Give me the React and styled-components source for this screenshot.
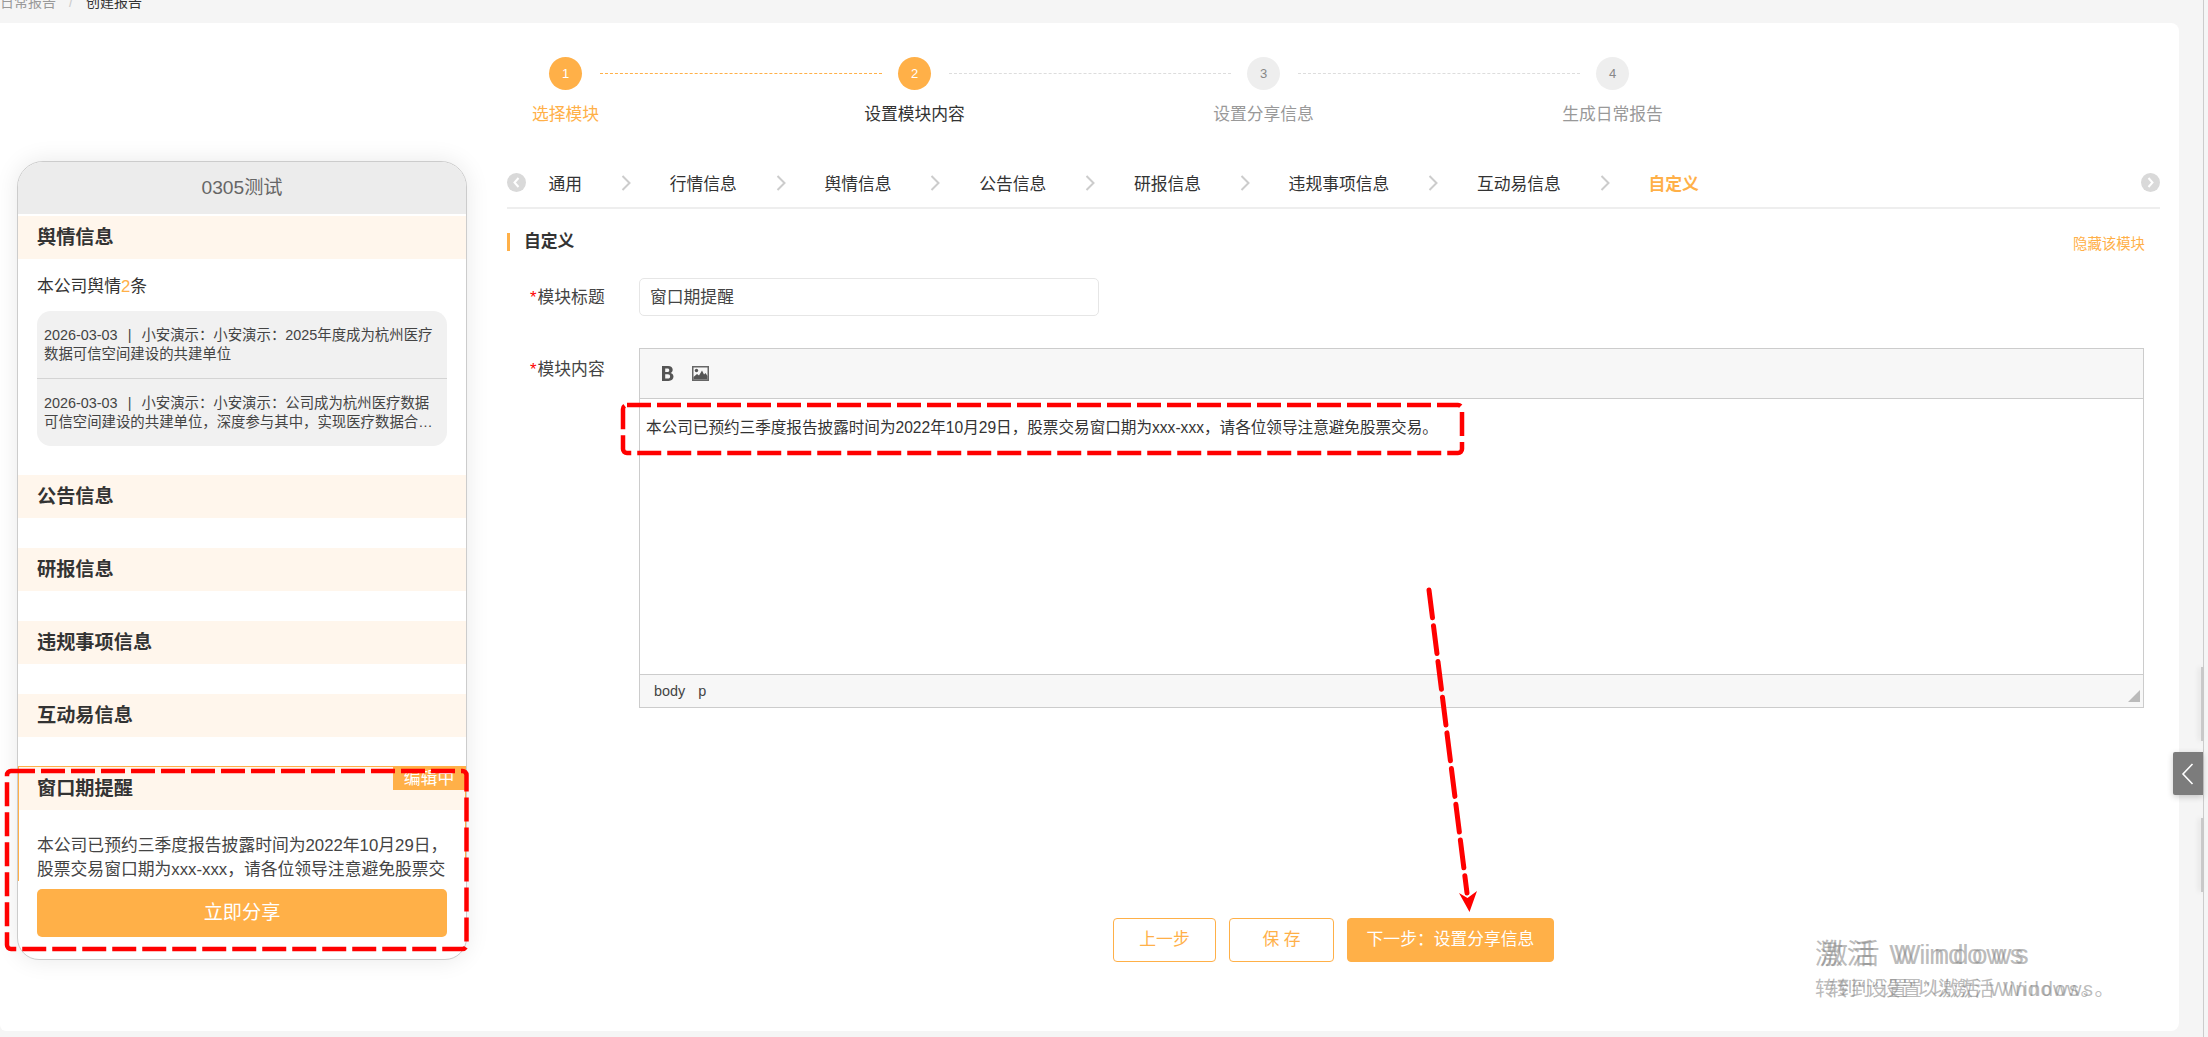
import React from "react";
import styled, { createGlobalStyle } from "styled-components";

const orange = "#ffb048";

const GlobalStyle = createGlobalStyle`
  html, body {
    margin: 0;
    padding: 0;
    width: 2208px;
    height: 1037px;
    overflow: hidden;
    background: #f5f5f5;
    font-family: "Liberation Sans", "Noto Sans CJK SC", sans-serif;
    color: #333;
  }
`;

const Page = styled.div`
  position: relative;
  width: 2208px;
  height: 1037px;
  overflow: hidden;
`;

const Breadcrumb = styled.div`
  display: flex;
  gap: 13px;
  height: 31px;
  margin: -8px 0 0 0;
  font-size: 14px;
  line-height: 20px;
  color: #999;
  b {
    font-weight: normal;
    color: #333;
  }
  i {
    font-style: normal;
    color: #ccc;
  }
`;

const Card = styled.div`
  width: 2179px;
  height: 1008px;
  background: #fff;
  border-radius: 0 8px 8px 6px;
`;

const Steps = styled.div`
  display: flex;
  height: 138px;
  padding: 34px 0 0 391px;
  box-sizing: border-box;
`;

const Step = styled.div`
  position: relative;
  width: 349px;
  display: flex;
  flex-direction: column;
  align-items: center;
  gap: 14px;
  font-size: 16.8px;
  line-height: 22px;
  color: ${(p) => (p.$state === "done" ? orange : p.$state === "now" ? "#333" : "#999")};
`;

const StepLine = styled.div`
  position: absolute;
  top: 16px;
  left: calc(50% + 34px);
  width: 282px;
  height: 0;
  border-top: 1px dashed ${(p) => (p.$on ? orange : "#ddd")};
`;

const Circle = styled.div`
  width: 33px;
  height: 33px;
  border-radius: 50%;
  display: flex;
  align-items: center;
  justify-content: center;
  font-size: 13px;
  background: ${(p) => (p.$on ? orange : "#eee")};
  color: ${(p) => (p.$on ? "#fff" : "#888")};
`;

const Body = styled.div`
  display: flex;
  align-items: flex-start;
  padding-left: 17px;
`;

const Phone = styled.div`
  flex: none;
  width: 450px;
  height: 799px;
  box-sizing: border-box;
  border: 1px solid #ccc;
  border-radius: 26px 26px 22px 22px;
  box-shadow: 0 0 24px rgba(0, 0, 0, 0.09);
  overflow: hidden;
  background: #fff;
`;

const PhoneTitle = styled.div`
  height: 52px;
  margin-bottom: 2px;
  background: #ececec;
  color: #666;
  font-size: 19.2px;
  line-height: 52px;
  text-align: center;
`;

const SectionHead = styled.div`
  height: 43px;
  padding-left: ${(p) => (p.$active ? 18 : 19)}px;
  background: #fff6ec;
  color: #333;
  font-size: 19.2px;
  font-weight: bold;
  line-height: 43px;
`;

const Section = styled.section`
  margin-bottom: 30px;
`;

const Summary = styled.div`
  padding: 17px 0 13px 19px;
  font-size: 16.8px;
  line-height: 22px;
  span {
    color: ${orange};
  }
`;

const NewsBox = styled.div`
  width: 410px;
  margin-left: 19px;
  margin-bottom: -1px;
  background: #f1f1f1;
  border-radius: 14px;
`;

const NewsItem = styled.div`
  padding: 15px 11px 15px 7px;
  height: 67px;
  box-sizing: border-box;
  font-size: 14.4px;
  line-height: 19.2px;
  color: #444;
  & + & {
    border-top: 1px solid #d4d4d4;
    height: 68px;
  }
  div {
    display: -webkit-box;
    -webkit-box-orient: vertical;
    -webkit-line-clamp: 2;
    overflow: hidden;
  }
`;

const Pipe = styled.span`
  padding: 0 10px;
`;

const ActiveSection = styled.section`
  position: relative;
  height: 115px;
  margin-top: -1px;
  box-sizing: border-box;
  border: 1px solid ${orange};
  border-bottom: none;
  overflow: hidden;
`;

const EditTag = styled.div`
  position: absolute;
  top: 0;
  right: 0;
  width: 72px;
  height: 23px;
  background: ${orange};
  color: #fff;
  font-size: 16.8px;
  line-height: 24px;
  text-align: center;
`;

const ActiveText = styled.div`
  padding: 24px 0 0 18px;
  width: 412px;
  font-size: 16.8px;
  line-height: 23.5px;
  color: #444;
`;

const ShareButton = styled.div`
  width: 410px;
  height: 48px;
  margin: 8px 0 0 19px;
  border-radius: 5px;
  background: ${orange};
  color: #fff;
  font-size: 19.2px;
  line-height: 47px;
  text-align: center;
`;

const Main = styled.div`
  width: 1653px;
  margin-left: 40px;
`;

const Tabs = styled.div`
  display: flex;
  align-items: center;
  gap: 38.8px;
  height: 43px;
  padding-bottom: 3px;
  border-bottom: 2px solid #eee;
`;

const RoundArrow = styled.svg`
  flex: none;
  width: 19px;
  height: 19px;
  margin-right: ${(p) => (p.$left ? "-16.300px" : "0")};
  margin-left: ${(p) => (p.$left ? "0" : "auto")};
`;

const Tab = styled.div`
  font-size: 16.8px;
  color: ${(p) => (p.$on ? orange : "#333")};
  font-weight: ${(p) => (p.$on ? "bold" : "normal")};
`;

const Chevron = styled.svg`
  flex: none;
  width: 10px;
  height: 16px;
`;

const TitleRow = styled.div`
  display: flex;
  justify-content: space-between;
  align-items: center;
  height: 18px;
  margin-top: 24px;
  padding-right: 15px;
`;

const SectionTitle = styled.div`
  border-left: 3px solid ${orange};
  padding-left: 14px;
  font-size: 16.8px;
  font-weight: bold;
  line-height: 18px;
`;

const HideLink = styled.div`
  font-size: 14.4px;
  color: ${orange};
`;

const FormRow = styled.div`
  display: flex;
  align-items: flex-start;
  margin-top: ${(p) => p.$top}px;
`;

const Label = styled.label`
  flex: none;
  width: 132px;
  padding: ${(p) => p.$pad}px 0 0 23px;
  box-sizing: border-box;
  font-size: 16.8px;
  line-height: 22px;
  color: #444;
  em {
    font-style: normal;
    color: #f00;
    margin-right: 1px;
  }
`;

const TitleInput = styled.div`
  width: 460px;
  height: 38px;
  box-sizing: border-box;
  border: 1px solid #e6e6e6;
  border-radius: 5px;
  padding-left: 10px;
  font-size: 16.8px;
  line-height: 38px;
  color: #444;
`;

const Editor = styled.div`
  width: 1505px;
  height: 360px;
  box-sizing: border-box;
  border: 1px solid #ccc;
  display: flex;
  flex-direction: column;
`;

const EditorBar = styled.div`
  display: flex;
  align-items: center;
  gap: 18px;
  height: 49px;
  padding-left: 21px;
  background: #f7f7f7;
  border-bottom: 1px solid #ccc;
`;

const EditorBody = styled.div`
  flex: 1;
  padding: 18px 6px 0;
  font-size: 15.6px;
  line-height: 22px;
  color: #333;
`;

const EditorFoot = styled.div`
  position: relative;
  display: flex;
  gap: 13px;
  height: 32px;
  padding-left: 14px;
  background: #f7f7f7;
  border-top: 1px solid #ccc;
  font-size: 14.4px;
  line-height: 32px;
  color: #444;
`;

const Resize = styled.svg`
  position: absolute;
  right: 3px;
  bottom: 5px;
  width: 12px;
  height: 12px;
`;

const Actions = styled.div`
  display: flex;
  justify-content: center;
  gap: 13px;
  margin-top: 210px;
`;

const Button = styled.div`
  width: ${(p) => p.$w}px;
  height: 44px;
  box-sizing: border-box;
  border: 1px solid ${orange};
  border-radius: 4px;
  background: ${(p) => (p.$fill ? orange : "#fff")};
  color: ${(p) => (p.$fill ? "#fff" : orange)};
  font-size: 16.8px;
  line-height: 42px;
  text-align: center;
  white-space: pre;
`;

const SideTab = styled.div`
  position: absolute;
  top: 752px;
  left: 2173px;
  width: 30px;
  height: 43px;
  border-radius: 2px 0 0 2px;
  background: #7c7c7c;
  box-shadow: 0 2px 6px rgba(0, 0, 0, 0.2);
  display: flex;
  align-items: center;
  justify-content: center;
`;

const ScrollEdge = styled.div`
  position: absolute;
  top: 0;
  left: 2203px;
  width: 1px;
  height: 1037px;
  background: #ccc;
`;

const ScrollThumb = styled.div`
  position: absolute;
  top: ${(p) => p.$top}px;
  left: 2201px;
  width: 2px;
  height: ${(p) => p.$h}px;
  background: #c9c9c9;
  box-shadow: -2px 0 5px rgba(0, 0, 0, 0.12);
`;

const Activate = styled.div`
  position: absolute;
  white-space: nowrap;
  left: ${(p) => p.$x}px;
  top: ${(p) => p.$y}px;
  font-size: ${(p) => p.$size}px;
  letter-spacing: ${(p) => p.$track}px;
  line-height: 1;
  color: rgba(130, 130, 130, 0.55);
`;

const Overlay = styled.svg`
  position: absolute;
  top: 0;
  left: 0;
  pointer-events: none;
`;

const steps = [
  ["选择模块", "done"],
  ["设置模块内容", "now"],
  ["设置分享信息", "todo"],
  ["生成日常报告", "todo"],
];

const tabs = ["通用", "行情信息", "舆情信息", "公告信息", "研报信息", "违规事项信息", "互动易信息"];

const emptySections = ["公告信息", "研报信息", "违规事项信息", "互动易信息"];

const windowText = "本公司已预约三季度报告披露时间为2022年10月29日，股票交易窗口期为xxx-xxx，请各位领导注意避免股票交易。";

const TabChevron = () => (
  <Chevron viewBox="0 0 10 16">
    <polyline points="1.5,1 8.5,8 1.5,15" fill="none" stroke="#ccc" strokeWidth="2" />
  </Chevron>
);

const CircleArrow = ({ left }) => (
  <RoundArrow viewBox="0 0 19 19" $left={left}>
    <circle cx="9.5" cy="9.5" r="9.5" fill="#d9d9d9" />
    <polyline
      points={left ? "11.5,5 7.5,9.5 11.5,14" : "7.5,5 11.5,9.5 7.5,14"}
      fill="none"
      stroke="#fff"
      strokeWidth="2"
    />
  </RoundArrow>
);

const BoldIcon = () => (
  <svg width="13" height="15" viewBox="0 0 13 15">
    <path
      fillRule="evenodd"
      fill="#555"
      d="M1 0h6.2C10 0 11.700 1.400 11.700 3.700c0 1.500-.8 2.700-2.100 3.200 1.800.4 2.900 1.800 2.900 3.700 0 2.700-2 4.400-5 4.400H1zM4.200 2.500v3.500h2.200c1.200 0 1.900-.7 1.900-1.800s-.7-1.700-1.900-1.700zM4.200 8.300v4.200h2.700c1.400 0 2.200-.8 2.200-2.100s-.8-2.100-2.200-2.100z"
    />
  </svg>
);

const ImageIcon = () => (
  <svg width="17" height="15" viewBox="0 0 17 15">
    <rect width="17" height="15" fill="#666" />
    <rect x="1.500" y="1.500" width="14" height="12" fill="#f7f7f7" />
    <circle cx="4.500" cy="4.500" r="1.700" fill="#555" />
    <path fill="#555" d="M1.500 11l3.500-3 2 1.500L10 4.500l2 4 1.500-1.500 2 3v3.500h-14z" />
  </svg>
);

export default function App() {
  return (
    <Page>
      <GlobalStyle />
      <Breadcrumb>
        <span>日常报告</span>
        <i>/</i>
        <b>创建报告</b>
      </Breadcrumb>
      <Card>
        <Steps>
          {steps.map(([label, state], i) => (
            <Step key={label} $state={state}>
              <Circle $on={state !== "todo"}>{i + 1}</Circle>
              {label}
              {i < 3 && <StepLine $on={state === "done"} />}
            </Step>
          ))}
        </Steps>
        <Body>
          <Phone>
            <PhoneTitle>0305测试</PhoneTitle>
            <Section>
              <SectionHead>舆情信息</SectionHead>
              <Summary>
                本公司舆情<span>2</span>条
              </Summary>
              <NewsBox>
                <NewsItem>
                  <div>
                    2026-03-03<Pipe>|</Pipe>小安演示：小安演示：2025年度成为杭州医疗数据可信空间建设的共建单位
                  </div>
                </NewsItem>
                <NewsItem>
                  <div>
                    2026-03-03<Pipe>|</Pipe>小安演示：小安演示：公司成为杭州医疗数据可信空间建设的共建单位，深度参与其中，实现医疗数据合规流通与共享应用
                  </div>
                </NewsItem>
              </NewsBox>
            </Section>
            {emptySections.map((name) => (
              <Section key={name}>
                <SectionHead>{name}</SectionHead>
              </Section>
            ))}
            <ActiveSection>
              <SectionHead $active>窗口期提醒</SectionHead>
              <EditTag>编辑中</EditTag>
              <ActiveText>{windowText}</ActiveText>
            </ActiveSection>
            <ShareButton>立即分享</ShareButton>
          </Phone>
          <Main>
            <Tabs>
              <CircleArrow left />
              {tabs.map((t) => (
                <React.Fragment key={t}>
                  <Tab>{t}</Tab>
                  <TabChevron />
                </React.Fragment>
              ))}
              <Tab $on>自定义</Tab>
              <CircleArrow />
            </Tabs>
            <TitleRow>
              <SectionTitle>自定义</SectionTitle>
              <HideLink>隐藏该模块</HideLink>
            </TitleRow>
            <FormRow $top={27}>
              <Label $pad={9}>
                <em>*</em>模块标题
              </Label>
              <TitleInput>窗口期提醒</TitleInput>
            </FormRow>
            <FormRow $top={32}>
              <Label $pad={11}>
                <em>*</em>模块内容
              </Label>
              <Editor>
                <EditorBar>
                  <BoldIcon />
                  <ImageIcon />
                </EditorBar>
                <EditorBody>{windowText}</EditorBody>
                <EditorFoot>
                  <span>body</span>
                  <span>p</span>
                  <Resize viewBox="0 0 12 12">
                    <polygon points="12,0 12,12 0,12" fill="#bbb" />
                  </Resize>
                </EditorFoot>
              </Editor>
            </FormRow>
            <Actions>
              <Button $w={103}>上一步</Button>
              <Button $w={105}>保 存</Button>
              <Button $w={207} $fill>
                下一步：设置分享信息
              </Button>
            </Actions>
          </Main>
        </Body>
      </Card>
      <ScrollEdge />
      <ScrollThumb $top={667} $h={74} />
      <ScrollThumb $top={818} $h={74} />
      <SideTab>
        <svg width="14" height="22" viewBox="0 0 14 22">
          <polyline points="11.500,1 2,11 11.500,21" fill="none" stroke="#fff" strokeWidth="1.600" />
        </svg>
      </SideTab>
      <Activate $x={1815} $y={941} $size={28} $track={3.5}>激活 Windows</Activate>
      <Activate $x={1820} $y={941} $size={28} $track={3.5}>激活 Windows</Activate>
      <Activate $x={1815} $y={979} $size={20} $track={1.5}>转到“设置”以激活 Windows。</Activate>
      <Activate $x={1829} $y={979} $size={20} $track={1.5}>转到“设置”以激活 Windows。</Activate>
      <Overlay width="2208" height="1037" viewBox="0 0 2208 1037">
        <g fill="none" stroke="#f00" strokeWidth="4.500" strokeDasharray="24 6">
          <rect x="7" y="771" width="459.500" height="178" rx="4" />
          <rect x="623" y="405" width="839" height="48" rx="4" />
        </g>
        <line
          x1="1429"
          y1="590"
          x2="1467"
          y2="893"
          stroke="#f00"
          strokeWidth="5"
          strokeLinecap="round"
          strokeDasharray="28 8"
        />
        <polygon points="1469.500,912 1459,893 1467.500,898 1477,891" fill="#f00" />
      </Overlay>
    </Page>
  );
}
